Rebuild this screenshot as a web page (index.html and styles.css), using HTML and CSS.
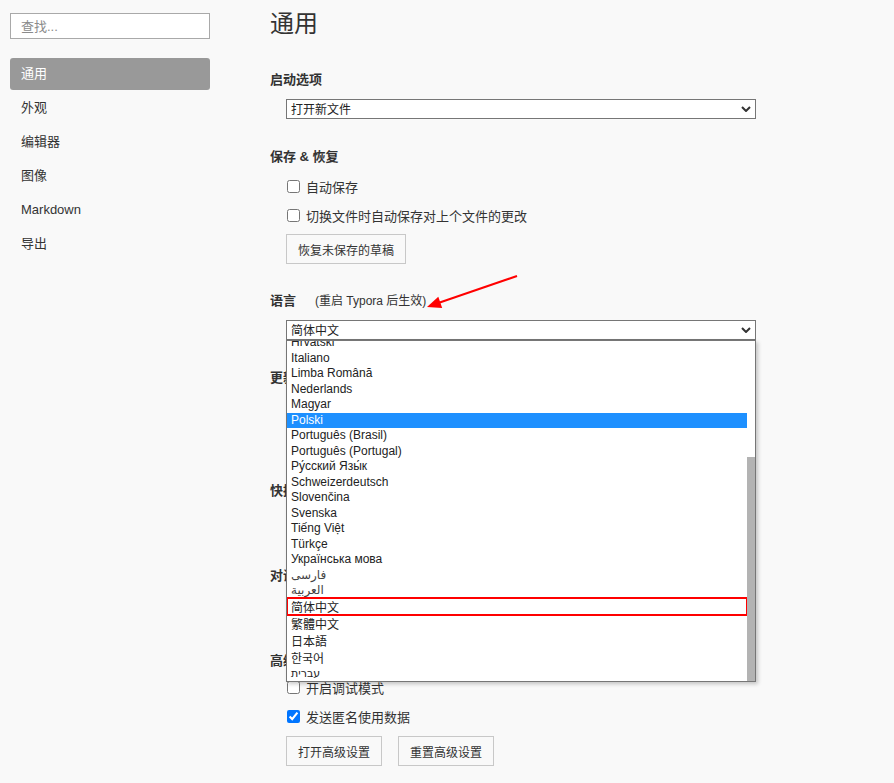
FILE: index.html
```html
<!DOCTYPE html>
<html lang="zh-CN">
<head>
<meta charset="utf-8">
<title>偏好设置 - 通用</title>
<link rel="stylesheet" href="styles.css">
</head>
<body>
<div class="app">
  <aside class="sidebar">
    <input class="search" type="text" placeholder="查找...">
    <nav class="nav">
      <div class="nav-item active">通用</div>
      <div class="nav-item">外观</div>
      <div class="nav-item">编辑器</div>
      <div class="nav-item">图像</div>
      <div class="nav-item">Markdown</div>
      <div class="nav-item">导出</div>
    </nav>
  </aside>

  <main class="main">
    <h1 class="page-title">通用</h1>

    <section class="group first">
      <h3 class="group-title">启动选项</h3>
      <div class="select-wrap">
        <div class="select"><span>打开新文件</span><svg class="chev" width="10" height="6" viewBox="0 0 10 6"><path d="M1 1 L5 5 L9 1" fill="none" stroke="#333" stroke-width="2"/></svg></div>
      </div>
    </section>

    <section class="group">
      <h3 class="group-title">保存 &amp; 恢复</h3>
      <label class="check-row first-row"><input type="checkbox"><span>自动保存</span></label>
      <label class="check-row"><input type="checkbox"><span>切换文件时自动保存对上个文件的更改</span></label>
      <div class="btn-row"><button class="btn">恢复未保存的草稿</button></div>
    </section>

    <section class="group lang">
      <div class="title-row">
        <h3 class="group-title">语言</h3>
        <span class="note">(重启 Typora 后生效)</span>
        <svg class="arrow" width="100" height="40" viewBox="0 0 100 40">
          <line x1="97" y1="5" x2="19" y2="31.7" stroke="#f00" stroke-width="2"/>
          <polygon points="7,36 18.3,25.7 22.2,37.1" fill="#f00"/>
        </svg>
      </div>
      <div class="select-wrap lang-select">
        <div class="select"><span>简体中文</span><svg class="chev" width="10" height="6" viewBox="0 0 10 6"><path d="M1 1 L5 5 L9 1" fill="none" stroke="#333" stroke-width="2"/></svg></div>
        <div class="dropdown">
          <div class="dropdown-list">
            <div class="options">
              <div class="option">Hrvatski</div>
              <div class="option">Italiano</div>
              <div class="option">Limba Română</div>
              <div class="option">Nederlands</div>
              <div class="option">Magyar</div>
              <div class="option selected">Polski</div>
              <div class="option">Português (Brasil)</div>
              <div class="option">Português (Portugal)</div>
              <div class="option">Pу́сский Язы́к</div>
              <div class="option">Schweizerdeutsch</div>
              <div class="option">Slovenčina</div>
              <div class="option">Svenska</div>
              <div class="option">Tiếng Việt</div>
              <div class="option">Türkçe</div>
              <div class="option">Українська мова</div>
              <div class="option arabic">فارسی</div>
              <div class="option arabic">العربية</div>
              <div class="option cjk current">简体中文</div>
              <div class="option cjk tc">繁體中文</div>
              <div class="option cjk jp">日本語</div>
              <div class="option cjk kr">한국어</div>
              <div class="option hebrew">עברית</div>
            </div>
          </div>
          <div class="scrollbar"><div class="thumb"></div></div>
        </div>
      </div>
    </section>

    <section class="group">
      <h3 class="group-title">更新</h3>
      <div class="group-body body-updates"></div>
    </section>

    <section class="group">
      <h3 class="group-title">快捷键</h3>
      <div class="group-body body-short"></div>
    </section>

    <section class="group">
      <h3 class="group-title">对话框</h3>
      <div class="group-body body-short"></div>
    </section>

    <section class="group">
      <h3 class="group-title">高级设置</h3>
      <label class="check-row adv-first"><input type="checkbox"><span>开启调试模式</span></label>
      <label class="check-row"><input type="checkbox" checked><span>发送匿名使用数据</span></label>
      <div class="btn-row adv-btns"><button class="btn">打开高级设置</button><button class="btn">重置高级设置</button></div>
    </section>
  </main>
</div>
</body>
</html>
```

FILE: styles.css
```css
html, body {
  margin: 0;
  padding: 0;
  background: #f9f9f9;
}

body {
  font-family: "Liberation Sans", "Noto Sans CJK SC", sans-serif;
  color: #333;
  font-size: 13px;
}

.app {
  display: flex;
  align-items: flex-start;
}

/* Sidebar */
.sidebar {
  width: 200px;
  padding: 13px 0 0 10px;
  flex: none;
}

.search {
  display: block;
  box-sizing: border-box;
  width: 200px;
  height: 26px;
  margin: 0;
  padding: 0 10px;
  border: 1px solid #a9a9a9;
  background: #fff;
  font-family: "Liberation Sans", "Noto Sans CJK SC", sans-serif;
  font-size: 13px;
  color: #333;
  outline: none;
}

.search::placeholder {
  color: #8a8a8a;
}

.nav {
  margin-top: 19px;
  display: flex;
  flex-direction: column;
  gap: 2px;
}

.nav-item {
  height: 32px;
  line-height: 32px;
  padding-left: 11px;
  font-size: 13px;
  color: #333;
  border-radius: 3px;
}

.nav-item.active {
  background: #999;
  color: #fff;
}

/* Main */
.main {
  margin-left: 60px;
  width: 485px;
  padding-top: 8px;
}

.page-title {
  margin: 0;
  font-size: 24px;
  line-height: 32px;
  font-weight: normal;
  color: #333;
}

.group {
  margin-top: 29px;
}

.group.first {
  margin-top: 31px;
}

.group.lang {
  margin-top: 27px;
}

.group-title {
  margin: 0;
  font-size: 13px;
  line-height: 18px;
  font-weight: bold;
  color: #333;
}

.title-row {
  position: relative;
  display: flex;
  align-items: baseline;
  gap: 19px;
  height: 18px;
}

.note {
  font-size: 12px;
  color: #333;
}

.arrow {
  position: absolute;
  left: 150px;
  top: -20px;
}

.select-wrap {
  position: relative;
  margin: 10px 0 0 16px;
  width: 470px;
  height: 20px;
}

.lang-select {
  margin-top: 11px;
}

.select {
  box-sizing: border-box;
  height: 20px;
  border: 1px solid #767676;
  background: #fff;
  display: flex;
  align-items: center;
  justify-content: space-between;
  padding: 0 4px 1px 4px;
  font-size: 12px;
  color: #222;
}

.chev {
  display: block;
}

/* Dropdown (open list) */
.dropdown {
  position: absolute;
  top: 20px;
  left: 0;
  width: 470px;
  height: 342px;
  box-sizing: border-box;
  border: 1px solid #767676;
  background: #fff;
  box-shadow: 2px 2px 4px rgba(0, 0, 0, 0.22);
  display: flex;
  z-index: 5;
}

.dropdown-list {
  flex: 1;
  overflow: hidden;
}

.options {
  margin-top: -6px;
}

.option {
  height: 15.5px;
  line-height: 15.5px;
  padding-left: 4px;
  font-family: "Liberation Sans", sans-serif;
  font-size: 12px;
  color: #222;
  white-space: nowrap;
  overflow: hidden;
}

.option.selected {
  background: #1e90ff;
  color: #fff;
}

.option.arabic {
  height: 15px;
  line-height: 15px;
  font-family: "DejaVu Sans", sans-serif;
  font-size: 12px;
  color: #444;
}

.option.hebrew {
  font-family: "DejaVu Sans", sans-serif;
  font-size: 11px;
}

.option.cjk {
  height: 17px;
  line-height: 17px;
  font-family: "Noto Sans CJK SC", sans-serif;
}

.option.tc {
  font-family: "Noto Sans CJK TC", sans-serif;
}

.option.jp {
  font-family: "Noto Sans CJK JP", sans-serif;
}

.option.kr {
  font-family: "Noto Sans CJK KR", sans-serif;
}

.option.current {
  outline: 2px solid #f00;
  outline-offset: -1px;
}

.scrollbar {
  width: 8px;
  display: flex;
  flex-direction: column;
}

.thumb {
  margin-top: 116px;
  flex: 1;
  background: #b3b3b3;
}

/* Checkboxes */
.check-row {
  display: flex;
  align-items: center;
  gap: 6px;
  height: 20px;
  margin: 9px 0 0 16px;
  font-size: 13px;
  color: #333;
}

.check-row.first-row {
  margin-top: 10px;
}

.check-row.adv-first {
  margin-top: 7px;
}

.check-row input {
  width: 13px;
  height: 13px;
  margin: 0 0 0 1px;
  flex: none;
}

/* Buttons */
.btn-row {
  display: flex;
  gap: 16px;
  margin: 9px 0 0 16px;
}

.btn-row.adv-btns {
  margin-top: 10px;
}

.btn {
  height: 30px;
  padding: 0 11px;
  border: 1px solid #c8c8c8;
  background: #f9f9f9;
  font-family: "Liberation Sans", "Noto Sans CJK SC", sans-serif;
  font-size: 12px;
  color: #333;
  border-radius: 0;
}

.body-updates {
  height: 66px;
}

.body-short {
  height: 38px;
}
```
